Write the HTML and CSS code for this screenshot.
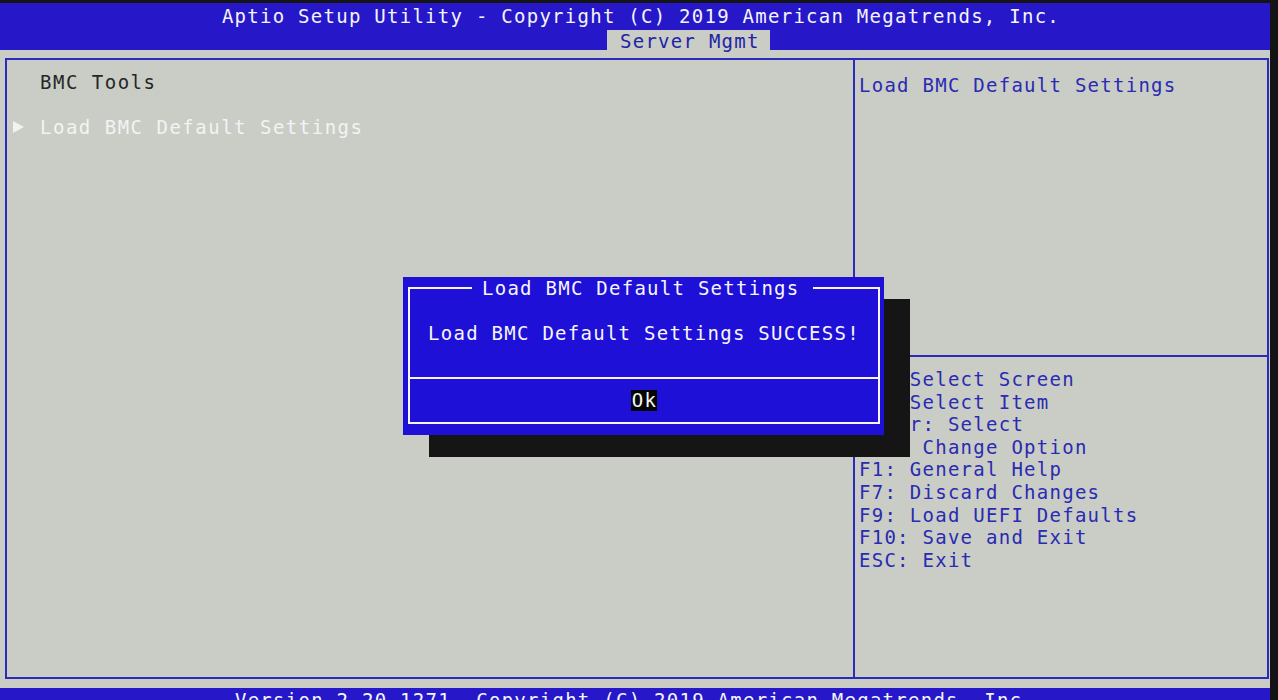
FILE: index.html
```html
<!DOCTYPE html>
<html lang="en">
<head>
    <meta charset="UTF-8">
    <meta name="viewport" content="width=device-width, initial-scale=1.0">
    <title>Aptio Setup Utility</title>
    <link rel="stylesheet" href="styles.css">
</head>
<body>
    <div class="screen">
        <!-- Barra superior con título y pestañas -->
        <header class="topbar">
            <div class="title">Aptio Setup Utility - Copyright (C) 2019 American Megatrends, Inc.</div>
            <nav class="tabs">
                <span class="tab active">Server Mgmt</span>
            </nav>
        </header>

        <!-- Panel principal -->
        <main class="panel">
            <section class="menu">
                <div class="row heading"><span class="marker"></span>BMC Tools</div>
                <div class="row"></div>
                <div class="row selected">
                    <span class="marker">
                        <svg width="11" height="12" viewBox="0 0 11 12"><polygon points="0,0 11,6 0,12" fill="#f2f2f2"/></svg>
                    </span>Load BMC Default Settings
                </div>
            </section>

            <aside class="side">
                <div class="help">Load BMC Default Settings</div>
                <ul class="keys">
                    <li>&rarr;&larr;: Select Screen</li>
                    <li>&uarr;&darr;: Select Item</li>
                    <li>Enter: Select</li>
                    <li>+/-: Change Option</li>
                    <li>F1: General Help</li>
                    <li>F7: Discard Changes</li>
                    <li>F9: Load UEFI Defaults</li>
                    <li>F10: Save and Exit</li>
                    <li>ESC: Exit</li>
                </ul>
            </aside>
        </main>

        <footer class="bottombar">Version 2.20.1271. Copyright (C) 2019 American Megatrends, Inc.</footer>

        <!-- Ventana emergente -->
        <div class="dialog">
            <div class="dialog-title">
                <span class="edge left"></span>
                <span class="caption">Load BMC Default Settings</span>
                <span class="edge right"></span>
            </div>
            <div class="dialog-body">
                <p class="message">Load BMC Default Settings SUCCESS!</p>
                <div class="actions"><span class="btn">Ok</span></div>
            </div>
        </div>
    </div>
</body>
</html>
```

FILE: styles.css
```css
body {
    margin: 0;
    padding-top: 3px;
    background-color: #141416;
    font-family: "DejaVu Sans Mono", "Liberation Mono", monospace;
    font-size: 19px;
    letter-spacing: 1.26px;
    overflow: hidden;
}
.screen {
    position: relative;
    width: 1270px;
    height: 697px;
    background-color: #c9cdc6; /* gris de fondo */
    overflow: hidden;
}
.topbar {
    background-color: #2618c9; /* azul */
    color: #f4f4f8;
    height: 47px;
}
.title {
    height: 27px;
    line-height: 27px;
    padding-left: 12px;
    text-align: center;
}
.tabs {
    display: flex;
    height: 20px;
    padding-left: 607px;
}
.tab {
    line-height: 22px;
    padding: 0 10px 0 13px;
    color: #2323a6;
}
.tab.active {
    background-color: #c9cdc6;
}
.panel {
    display: grid;
    grid-template-columns: 846px 1fr;
    height: 621px;
    box-sizing: border-box;
    margin: 8px 1px 0 5px;
    border: 2px solid #2b2bbb;
}
.menu {
    padding: 11px 0 0 6px;
    letter-spacing: 1.5px;
}
.row {
    display: flex;
    align-items: center;
    height: 22.6px;
    line-height: 22.6px;
    color: #262626;
}
.marker {
    display: flex;
    width: 27px;
}
.row.selected {
    color: #f3f3f3;
}
.side {
    border-left: 2px solid #2b2bbb;
    color: #2a2ab2;
}
.help {
    height: 297px;
    box-sizing: border-box;
    padding: 14px 0 0 4px;
    line-height: 22.6px;
    border-bottom: 2px solid #2b2bbb;
}
.keys {
    list-style: none;
    margin: 0;
    padding: 11px 0 0 4px;
}
.keys li {
    height: 22.6px;
    line-height: 22.6px;
}
.bottombar {
    margin-top: 9px;
    height: 24px;
    line-height: 24px;
    background-color: #2618c9;
    color: #f4f4f8;
    text-align: center;
}
.dialog {
    position: absolute;
    left: 403px;
    top: 274px;
    width: 481px;
    height: 158px;
    box-sizing: border-box;
    padding: 0 4px 11px 5px;
    background-color: #1e10d6;
    color: #f6f6fa;
    box-shadow: 26px 22px 0 #151515; /* sombra */
    display: flex;
    flex-direction: column;
}
.dialog-title {
    display: flex;
    height: 22px;
}
.edge {
    flex: 1;
    margin-top: 10px;
    border-top: 2px solid #f6f6fa;
}
.edge.left {
    flex: 0 0 62px;
    border-left: 2px solid #f6f6fa;
}
.edge.right {
    border-right: 2px solid #f6f6fa;
}
.caption {
    line-height: 22px;
    padding: 0 14px 0 10px;
}
.dialog-body {
    flex: 1;
    display: flex;
    flex-direction: column;
    border: 2px solid #f6f6fa;
    border-top: none;
}
.message {
    margin: 0;
    height: 78px;
    box-sizing: border-box;
    padding-top: 23px;
    line-height: 22px;
    text-align: center;
}
.actions {
    flex: 1;
    display: flex;
    align-items: center;
    justify-content: center;
    border-top: 2px solid #f6f6fa;
}
.btn {
    background-color: #050505;
    line-height: 21px;
    padding: 0 0 0 1px;
}
```
